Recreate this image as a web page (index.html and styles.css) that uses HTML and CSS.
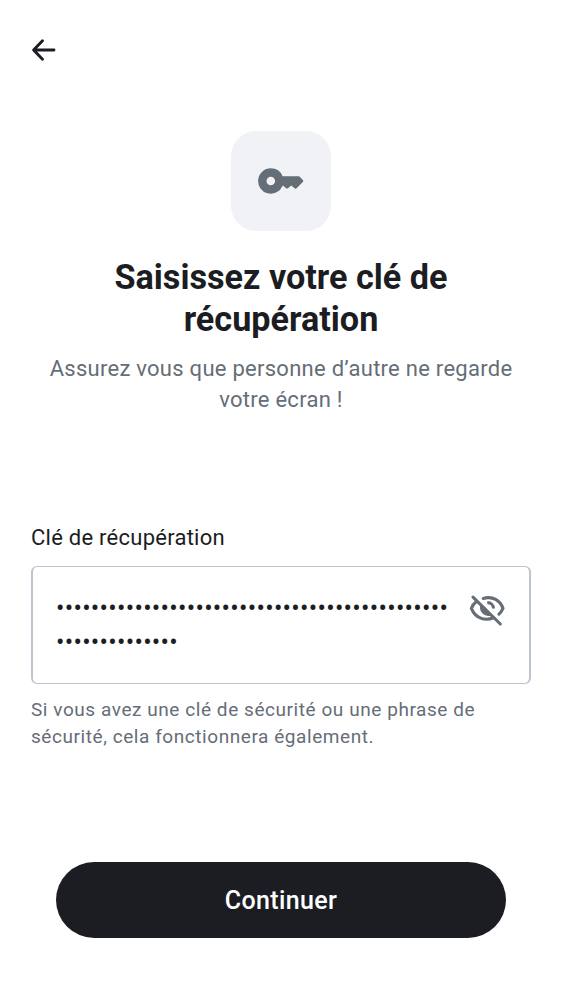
FILE: index.html
```html
<!DOCTYPE html>
<html lang="fr">
<head>
<meta charset="utf-8">
<title>Clé de récupération</title>
<link rel="stylesheet" href="styles.css">
</head>
<body>
<main class="screen">
  <header class="topbar">
    <svg class="back" viewBox="0 0 25 24"><path d="M11.500 2.700 2.600 12l8.900 9.300M3 12H23" fill="none" stroke="#1b1d22" stroke-width="2.900" stroke-linecap="round" stroke-linejoin="round"/></svg>
  </header>
  <section class="hero">
    <div class="tile">
      <svg class="key" viewBox="0 0 46 26"><path fill-rule="evenodd" d="M12.800.3a12.700 12.700 0 1 0 11.800 17.400h.6l2.900 2.500q.9.700 1.800 0l3.300-2.700 3.700 2.900q.9.600 1.700-.1l6.200-6.200q1-1.100 0-2.200l-3.100-3.100q-.5-.5-1.200-.5H24.600A12.700 12.700 0 0 0 12.800.3zm0 8.400a4.300 4.300 0 1 1 0 8.600 4.300 4.300 0 0 1 0-8.600z" fill="#656d77"/></svg>
    </div>
    <h1 class="title">Saisissez votre clé de<br>récupération</h1>
    <p class="subtitle">Assurez vous que personne d’autre ne regarde<br>votre écran !</p>
  </section>
  <section class="field">
    <label class="label">Clé de récupération</label>
    <div class="input">
      <div class="secret">•••••••••••••••••••••••••••••••••••••••••••••<br>••••••••••••••</div>
      <svg class="eye" viewBox="0 0 37 37">
        <g fill="none" stroke="#656d77" stroke-width="3.100" stroke-linecap="round">
          <path d="M14.200 8.400C24 5.800 31 10.500 34 18.300c-.9 2.500-2.300 4.300-4 5.900M7.700 11.200C5.300 13 3.400 15.500 2.400 18.300c4 10 13.500 13 22 9.500"/>
          <path d="M4 7.200 31.300 34"/>
          <path d="M18.300 12.600c3.700 0 6.200 2.500 6.200 6" stroke-linecap="butt"/>
        </g>
        <path d="M11.700 14.600A8.200 8.200 0 0 0 21.900 25.500z" fill="#656d77"/>
      </svg>
    </div>
    <p class="help">Si vous avez une clé de sécurité ou une phrase de<br>sécurité, cela fonctionnera également.</p>
  </section>
  <footer class="actions"><button class="continue">Continuer</button></footer>
</main>
</body>
</html>
```

FILE: styles.css
```css
* { box-sizing: border-box; }
body { margin: 0; background: #fff; color: #1b1d22; font-family: Roboto, sans-serif; }
.screen { height: 1000px; display: flex; flex-direction: column; overflow: hidden; }
.topbar { height: 131px; padding: 38px 31px; flex: none; }
.back { display: block; width: 25px; height: 24px; }
.hero { height: 391px; flex: none; display: flex; flex-direction: column; align-items: center; }
.tile { width: 100px; height: 100px; border-radius: 25px; background: #f0f2f5; display: grid; place-items: center; }
.key { width: 46px; height: 26px; }
.title { margin: 25px 0 0; font-size: 34.200px; line-height: 42px; font-weight: 700; text-align: center; white-space: nowrap; }
.subtitle { margin: 13px 0 0; font-size: 22px; line-height: 31px; letter-spacing: .27px; color: #656d77; text-align: center; white-space: nowrap; }
.field { height: 340px; flex: none; padding: 0 31px; white-space: nowrap; }
.label { display: block; font-size: 22px; line-height: 31px; letter-spacing: .25px; }
.input { height: 118px; margin-top: 13px; padding: 23px 23px 22px; border: solid #bdc3cf; border-width: 1px 2px; border-radius: 6px; display: flex; justify-content: space-between; }
.secret { padding-top: 2px; font-size: 25px; line-height: 34px; letter-spacing: .28px; }
.eye { width: 37px; height: 37px; flex: none; }
.help { margin: 12px 0 0; font-size: 19px; line-height: 27px; letter-spacing: .56px; color: #656d77; }
.actions { padding: 0 56px; }
.continue { width: 100%; height: 76px; border: 0; border-radius: 38px; background: #1b1d22; color: #fff; font: 500 25px/35px Roboto, sans-serif; letter-spacing: .35px; }
```
